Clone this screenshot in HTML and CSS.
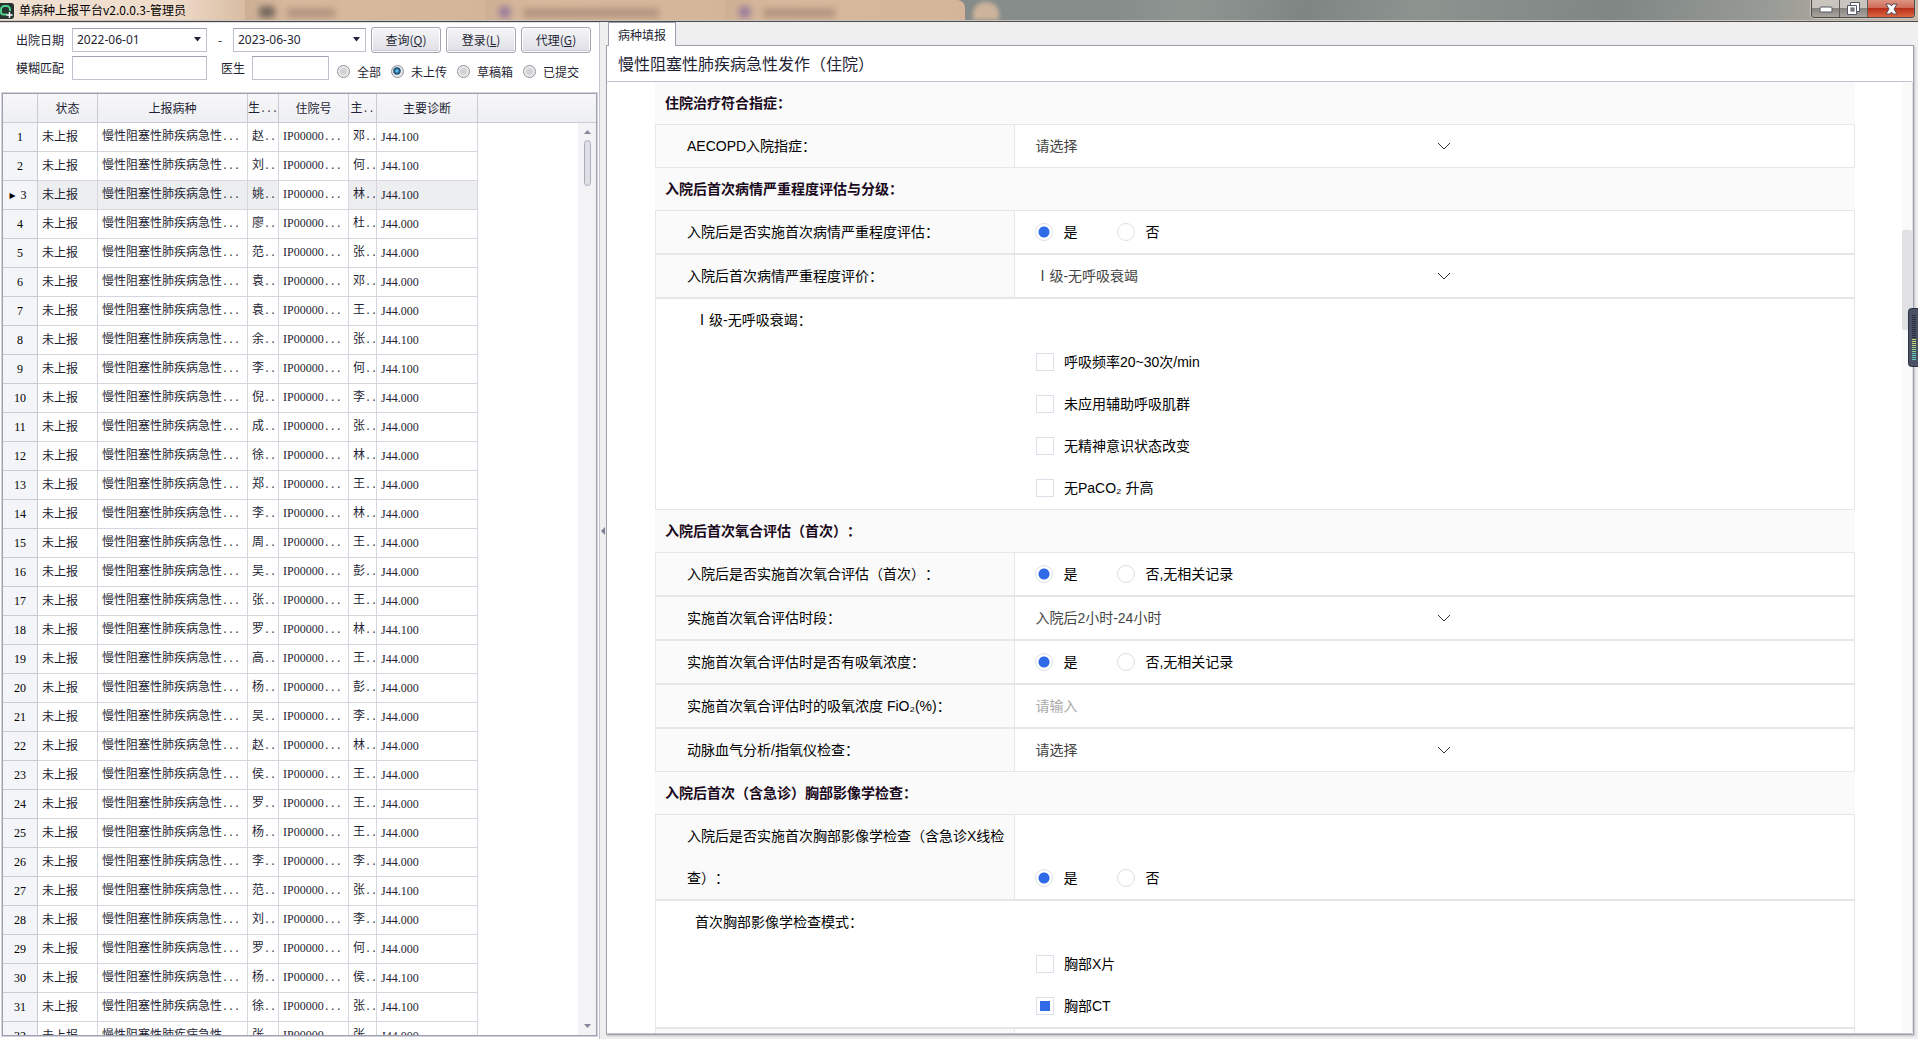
FILE: index.html
```html
<!DOCTYPE html>
<html lang="zh-CN">
<head>
<meta charset="utf-8">
<title>单病种上报平台v2.0.0.3-管理员</title>
<link rel="stylesheet" href="styles.css">
</head>
<body>
<header class="titlebar">
  <div class="glass" aria-hidden="true">
    <div class="glass-tab first"></div>
    <div class="glass-tab"><i class="blob dark"></i><i class="smear short"></i></div>
    <div class="glass-tab"><i class="blob"></i><i class="smear long"></i></div>
    <div class="glass-tab"><i class="blob"></i><i class="smear"></i></div>
    <i class="glass-plus"></i>
  </div>
  <svg class="app-icon" width="14" height="16" viewBox="0 0 14 16"><rect x="-3" width="17" height="16" rx="3" fill="#26332e"/><path d="M7 11.5H3.500A2.500 2.500 0 0 1 1 9V6.500A3.500 3.500 0 0 1 4.500 3h2A3.500 3.500 0 0 1 10 6.500V8" fill="none" stroke="#4fd08c" stroke-width="2"/><path d="M9.500 9v6M6.500 12h6" stroke="#fff" stroke-width="1.500"/></svg>
  <h1 class="app-title">单病种上报平台v2.0.0.3-管理员</h1>
  <div class="window-buttons">
    <button class="win-btn min" aria-label="最小化"><svg width="14" height="8" viewBox="0 0 14 8"><rect x="1" y="2" width="12" height="5" rx="1" fill="#fff" stroke="#535666"/></svg></button>
    <button class="win-btn restore" aria-label="还原"><svg width="13" height="13" viewBox="0 0 13 13"><path d="M3.500.5h9v9h-3v3h-9v-9h3z" fill="#fff" stroke="#535666"/><path d="M3.500 3.500h6v6" fill="none" stroke="#535666"/><rect x="4" y="6" width="3" height="3" fill="#999" stroke="#535666"/></svg></button>
    <button class="win-btn close" aria-label="关闭"><svg width="13" height="12" viewBox="0 0 13 12"><path d="M1 1h4l1.500 2L8 1h4L9 6l3 5H8L6.500 9 5 11H1l3-5z" fill="#fff" stroke="#5b4a55"/></svg></button>
  </div>
</header>
<main class="workspace">
  <section class="left-pane">
    <form class="filters">
      <div class="filter-row">
        <label class="flabel" for="from">出院日期</label>
        <div class="combo from"><select id="from"><option>2022-06-01</option></select><svg width="8" height="5" viewBox="0 0 8 5"><path d="M0 0h7L3.500 4.500z" fill="#222238"/></svg></div>
        <span class="dash">-</span>
        <div class="combo to"><select id="to" aria-label="出院日期止"><option>2023-06-30</option></select><svg width="8" height="5" viewBox="0 0 8 5"><path d="M0 0h7L3.500 4.500z" fill="#222238"/></svg></div>
        <div class="actions">
          <button type="button" class="btn">查询(<u>Q</u>)</button>
          <button type="button" class="btn">登录(<u>L</u>)</button>
          <button type="button" class="btn">代理(<u>G</u>)</button>
        </div>
      </div>
      <div class="filter-row">
        <label class="flabel" for="fuzzy">模糊匹配</label>
        <input class="field fuzzy" id="fuzzy" type="text">
        <label class="doctor-label" for="doctor">医生</label>
        <input class="field doctor" id="doctor" type="text">
        <div class="states">
          <label><input type="radio" name="state">全部</label>
          <label><input type="radio" name="state" checked>未上传</label>
          <label><input type="radio" name="state">草稿箱</label>
          <label><input type="radio" name="state">已提交</label>
        </div>
      </div>
    </form>
    <div class="grid-frame">
      <table class="grid">
        <colgroup><col class="c-no"><col class="c-state"><col class="c-kind"><col class="c-name"><col class="c-ip"><col class="c-doc"><col class="c-diag"><col></colgroup>
        <thead>
          <tr><th></th><th>状态</th><th>上报病种</th><th>生<span class="dots">...</span></th><th>住院号</th><th>主<span class="dots">..</span></th><th>主要诊断</th><th class="rest"></th></tr>
        </thead>
        <tbody id="rows"></tbody>
      </table>
      <div class="grid-scroll">
        <svg width="7" height="4" viewBox="0 0 7 4"><path d="M0 4h7L3.500 0z" fill="#85879a"/></svg>
        <div class="grid-thumb"></div>
        <svg class="down" width="7" height="4" viewBox="0 0 7 4"><path d="M0 0h7L3.500 4z" fill="#85879a"/></svg>
      </div>
    </div>
  </section>
  <div class="splitter"><svg width="4" height="8" viewBox="0 0 4 8"><path d="M4 0v8L0 4z" fill="#7d8093"/></svg></div>
  <section class="right-pane">
    <nav class="tabs"><button class="tab">病种填报</button></nav>
    <div class="sheet">
      <h2 class="sheet-title">慢性阻塞性肺疾病急性发作（住院）</h2>
      <div class="viewport">
        <form class="report">
          <h3>住院治疗符合指症：</h3>
          <div class="row"><label class="name" for="s1">AECOPD入院指症：</label><div class="value"><div class="pick"><select id="s1"><option>请选择</option></select><svg width="14" height="8" viewBox="0 0 14 8"><path d="M1 1l6 6 6-6" fill="none" stroke="#333"/></svg></div></div></div>
          <h3>入院后首次病情严重程度评估与分级：</h3>
          <div class="row"><span class="name" id="n2">入院后是否实施首次病情严重程度评估：</span><div class="value" role="radiogroup" aria-labelledby="n2"><label class="opt"><input type="radio" name="r2" checked>是</label><label class="opt"><input type="radio" name="r2">否</label></div></div>
          <div class="row"><label class="name" for="s3">入院后首次病情严重程度评价：</label><div class="value"><div class="pick"><select id="s3"><option>Ⅰ级-无呼吸衰竭</option></select><svg width="14" height="8" viewBox="0 0 14 8"><path d="M1 1l6 6 6-6" fill="none" stroke="#333"/></svg></div></div></div>
          <fieldset class="block">
            <legend>Ⅰ级-无呼吸衰竭：</legend>
            <label class="opt"><input type="checkbox">呼吸频率20~30次/min</label>
            <label class="opt"><input type="checkbox">未应用辅助呼吸肌群</label>
            <label class="opt"><input type="checkbox">无精神意识状态改变</label>
            <label class="opt"><input type="checkbox">无PaCO₂ 升高</label>
          </fieldset>
          <h3>入院后首次氧合评估（首次）：</h3>
          <div class="row"><span class="name" id="n4">入院后是否实施首次氧合评估（首次）：</span><div class="value" role="radiogroup" aria-labelledby="n4"><label class="opt"><input type="radio" name="r4" checked>是</label><label class="opt"><input type="radio" name="r4">否,无相关记录</label></div></div>
          <div class="row"><label class="name" for="s5">实施首次氧合评估时段：</label><div class="value"><div class="pick"><select id="s5"><option>入院后2小时-24小时</option></select><svg width="14" height="8" viewBox="0 0 14 8"><path d="M1 1l6 6 6-6" fill="none" stroke="#333"/></svg></div></div></div>
          <div class="row"><span class="name" id="n6">实施首次氧合评估时是否有吸氧浓度：</span><div class="value" role="radiogroup" aria-labelledby="n6"><label class="opt"><input type="radio" name="r6" checked>是</label><label class="opt"><input type="radio" name="r6">否,无相关记录</label></div></div>
          <div class="row"><label class="name" for="t7">实施首次氧合评估时的吸氧浓度 FiO₂(%)：</label><div class="value"><input class="entry" id="t7" type="text" placeholder="请输入"></div></div>
          <div class="row"><label class="name" for="s8">动脉血气分析/指氧仪检查：</label><div class="value"><div class="pick"><select id="s8"><option>请选择</option></select><svg width="14" height="8" viewBox="0 0 14 8"><path d="M1 1l6 6 6-6" fill="none" stroke="#333"/></svg></div></div></div>
          <h3>入院后首次（含急诊）胸部影像学检查：</h3>
          <div class="row"><span class="name" id="n9">入院后是否实施首次胸部影像学检查（含急诊X线检查）：</span><div class="value" role="radiogroup" aria-labelledby="n9"><label class="opt"><input type="radio" name="r9" checked>是</label><label class="opt"><input type="radio" name="r9">否</label></div></div>
          <fieldset class="block">
            <legend>首次胸部影像学检查模式：</legend>
            <label class="opt"><input type="checkbox">胸部X片</label>
            <label class="opt"><input type="checkbox" checked>胸部CT</label>
          </fieldset>
          <div class="row"><span class="name"></span><div class="value"></div></div>
        </form>
        <div class="view-scroll"><div class="view-thumb"></div></div>
      </div>
    </div>
  </section>
</main>
<svg class="meter" width="10" height="59" viewBox="0 0 10 59" aria-hidden="true">
  <rect x=".5" y=".5" width="14" height="58" rx="3" fill="#4b5265" stroke="#2e3240"/>
  <path d="M6 7v24" stroke="#2a2e3c" stroke-width="4" stroke-dasharray="1 1"/>
  <path d="M6 31v8" stroke="#c3d873" stroke-width="4" stroke-dasharray="1 1"/>
  <path d="M6 39v6" stroke="#8fd08f" stroke-width="4" stroke-dasharray="1 1"/>
  <path d="M6 45v8" stroke="#62cdb8" stroke-width="4" stroke-dasharray="1 1"/>
</svg>
<script src="rows.js"></script>
</body>
</html>
```
FILE: styles.css
```css
* { box-sizing: border-box; }
body {
  margin: 0;
  height: 100vh;
  display: flex;
  flex-direction: column;
  overflow: hidden;
  background: #efefef;
  color: #1f1f35;
  font: 12px/16px "Noto Sans CJK SC", sans-serif;
  text-spacing-trim: space-all;
}
button, input, select { font: inherit; color: inherit; margin: 0; }
h1, h2, h3 { margin: 0; font-weight: normal; }
select { appearance: none; border: 0; background: none; padding: 0; outline: 0; }

/* title bar */
.titlebar {
  position: relative;
  flex: none;
  height: 22px;
  display: flex;
  align-items: flex-start;
  background: linear-gradient(100deg, #858c8a 0 58%, #8f9692 62%, #7e8583 68%, #8d938f 74%, #7f8684 84%, #979b96 92%, #c9b7a5 100%);
  border-bottom: 1px solid #4e4a48;
  box-shadow: inset 0 -1px #c9c4c0;
}
.glass {
  position: absolute;
  inset: 0 auto 1px 0;
  width: 1003px;
  display: flex;
  overflow: hidden;
}
.glass-tab {
  flex: 0 0 240px;
  display: flex;
  align-items: flex-end;
  padding: 0 0 2px 14px;
  gap: 12px;
  background: linear-gradient(90deg, #cdb094, #d8b99d 20%, #d5b599);
}
.glass-tab.first { flex-basis: 245px; background: linear-gradient(90deg, #f0e0d2, #efdccb 70%, #d8bca2); }
.glass-tab:nth-of-type(4) { border-radius: 0 8px 0 0; }
.blob { width: 12px; height: 12px; border-radius: 4px; background: #9c7f9c; filter: blur(3px); }
.blob.dark { width: 16px; background: #77695f; }
.smear { width: 72px; height: 10px; background: #b39780; filter: blur(3px); }
.smear.short { width: 48px; }
.smear.long { width: 136px; }
.glass-plus { align-self: flex-end; width: 26px; height: 18px; margin-left: 8px; border-radius: 12px 12px 0 0; background: #cdb39b; filter: blur(2px); }
.app-icon { position: relative; margin-top: 3px; }
.app-title { position: relative; margin: 2px 0 0 5px; font-size: 12px; line-height: 16px; color: #000; }
.window-buttons {
  position: relative;
  display: flex;
  margin: 0 3px 0 auto;
  height: 18px;
  border: 1px solid #4b4846;
  border-top: 0;
  border-radius: 0 0 4px 4px;
  overflow: hidden;
  box-shadow: 0 0 0 1px #c9c6c2;
}
.win-btn {
  width: 28px;
  padding: 0;
  border: 0;
  border-right: 1px solid #5f5c5a;
  display: grid;
  place-items: center;
  background: linear-gradient(#c9c4be 0 45%, #88847f 50%, #aaa59f);
}
.win-btn.close { width: 46px; border: 0; background: linear-gradient(#dd9484, #cf6b58 45%, #b9301a 50%, #dd6543); }

/* layout */
.workspace { flex: 1; min-height: 0; display: flex; }
.left-pane { flex: none; width: 599px; display: flex; flex-direction: column; background: #fff; border-top: 1px solid #dcdce2; }
.splitter { flex: none; width: 7px; display: flex; align-items: center; justify-content: center; border-left: 1px solid #c3c4d0; }
.right-pane { flex: 1; min-width: 0; display: flex; flex-direction: column; padding: 0 4px 4px 0; }

/* filters */
.filters { flex: none; height: 70px; padding: 4px 0 0 16px; display: flex; flex-direction: column; gap: 3px; }
.filter-row { display: flex; align-items: center; height: 25px; }
.flabel { flex: none; width: 56px; }
.combo, .field { border: 1px solid #c0c1cc; border-top-color: #9fa0ae; background: #fff; height: 24px; }
.combo { display: grid; align-items: center; }
.combo > * { grid-area: 1 / 1; }
.combo select { font-family: "Noto Sans", sans-serif; padding-left: 4px; height: 22px; }
.combo svg { justify-self: end; margin-right: 4px; pointer-events: none; }
.from, .fuzzy { width: 135px; }
.to { width: 133px; }
.doctor { width: 77px; }
.dash { width: 26px; text-align: center; }
.doctor-label { padding: 0 7px 0 14px; }
.actions { display: flex; gap: 5px; margin-left: 5px; }
.btn {
  width: 70px;
  height: 26px;
  padding: 0;
  border: 1px solid #a3a4b2;
  border-radius: 3px;
  background: linear-gradient(#f6f6f8, #dedfe5);
  box-shadow: inset 0 0 0 1px #fff, inset 0 -2px #c9cad3;
}
.states { display: flex; align-items: center; gap: 10px; margin-left: 8px; }
.states label { display: flex; align-items: center; gap: 7px; height: 24px; padding-top: 8px; }
.states input {
  appearance: none;
  width: 13px;
  height: 13px;
  border: 1px solid #8f9096;
  border-radius: 50%;
  background: radial-gradient(circle, #d0d2d5 30%, #f2f2f2 70%);
}
.states input:checked { background: radial-gradient(circle at 45% 45%, #5fc4ee 8%, #123f66 36%, #e6eaee 52%); }

/* patient grid */
.grid-frame {
  flex: 1;
  min-height: 0;
  display: flex;
  position: relative;
  margin: 0 2px 3px;
  border: 1px solid #9fa1b0;
  outline: 1px solid #d0d1da;
  overflow: hidden;
}
.grid { width: 100%; height: max-content; table-layout: fixed; border-collapse: separate; border-spacing: 0; }
.c-no { width: 35px; }
.c-state { width: 60px; }
.c-kind { width: 150px; }
.c-name { width: 31px; }
.c-ip { width: 70px; }
.c-doc { width: 28px; }
.c-diag { width: 101px; }
.grid th {
  height: 29px;
  padding: 0;
  font-weight: normal;
  white-space: nowrap;
  border-right: 1px solid #c9cad4;
  border-bottom: 1px solid #c9cad4;
  background: linear-gradient(#f7f7f9, #eeeff2);
}
.grid th.rest { border-right: 0; }
.grid td {
  height: 29px;
  padding: 0 0 0 4px;
  overflow: hidden;
  white-space: nowrap;
  border-right: 1px solid #d6d7de;
  border-bottom: 1px solid #d6d7de;
  font-family: "Liberation Serif", "Noto Sans CJK SC", serif;
}
.grid td.no { padding: 0; text-align: center; color: #000; background: #f4f5f8; border-color: #c9cad4; }
.grid td.rest { border: 0; }
.grid tr.current td { background: #edeef0; }
.grid tr.current td.focus, .grid tr.current td.rest { background: #fff; }
.grid tr.current td.no { background: #f4f5f8; }
.current .no::before { content: "▸"; font-family: "DejaVu Sans", sans-serif; font-size: 12px; line-height: 12px; margin: 0 5px 0 -4px; }
.dots { font-family: "Liberation Mono", monospace; font-size: 10px; }
.grid-scroll {
  position: absolute;
  inset: 29px 0 0 auto;
  width: 18px;
  padding: 7px 0;
  display: flex;
  flex-direction: column;
  align-items: center;
  gap: 6px;
  background: #f3f3f6;
}
.grid-thumb { width: 7px; height: 46px; border: 1px solid #a9abb8; border-radius: 4px; background: #dfe0e6; }
.grid-scroll .down { margin-top: auto; }

/* report sheet */
.tabs { flex: none; height: 23px; padding-left: 2px; display: flex; }
.tab { position: relative; z-index: 1; height: 24px; width: 68px; padding: 0; border: 1px solid #9fa0af; border-bottom: 0; background: #fff; }
.sheet { flex: 1; min-height: 0; display: flex; flex-direction: column; background: #fff; border: 1px solid #9fa0af; box-shadow: 1px 1px 2px #c0c0c6; }
.sheet-title { flex: none; padding-left: 11px; font-size: 16px; line-height: 35px; }
.viewport { flex: 1; min-height: 0; display: flex; overflow: hidden; border: 1px solid #c2c3cf; border-right-color: #e0e0e8; border-left: 0; border-radius: 2px; }
.report { flex: 1; min-width: 0; padding: 0 47px 0 48px; font-family: "Liberation Sans", "Noto Sans CJK SC", sans-serif; font-size: 14px; line-height: 42px; color: #000; }
.report h3 { padding-left: 10px; font-size: 14px; font-weight: bold; height: 42px; background: #fafafa; color: #1a0a20; }
.row { display: flex; min-height: 44px; border: 1px solid #e6e6e6; }
.name { flex: none; width: 30%; padding: 0 10px 0 31px; background: #fafafa; border-right: 1px solid #e6e6e6; }
.value { flex: 1; min-width: 0; display: flex; align-items: flex-end; padding-left: 20px; }
.pick { width: 52%; display: grid; align-items: center; color: #444; }
.pick > * { grid-area: 1 / 1; }
.pick select { width: 100%; height: 42px; }
.pick svg { justify-self: end; margin-right: 10px; pointer-events: none; }
.entry { width: 52%; height: 42px; padding: 0; border: 0; background: none; }
.entry::placeholder { color: #aaa; opacity: 1; }
.opt { display: flex; align-items: center; gap: 10px; }
.value .opt { min-width: 82px; }
.opt input { appearance: none; width: 18px; height: 18px; border: 1px solid #dcdfe8; background: #fff content-box; padding: 3px; }
.opt input[type="radio"] { border-radius: 50%; }
.opt input:checked { background: radial-gradient(circle, #2f6be6 5px, #fff 6px); }
.opt input[type="checkbox"]:checked { background: #2f6be6 content-box; }
.block { margin: 0; padding: 0; min-width: 0; border: 1px solid #e6e6e6; display: flex; flex-direction: column; }
.block legend { float: left; padding: 0 0 0 39px; }
.block .opt { padding-left: 380px; }
.view-scroll { flex: none; width: 10px; background: #fafafa; padding-top: 148px; }
.view-thumb { height: 100px; border-radius: 2px; background: #e1e1e3; }
.meter { position: absolute; right: 0; top: 308px; }
```
FILE: rows.js
```js
const records = [
  ["赵", "邓", "J44.100"], ["刘", "何", "J44.100"], ["姚", "林", "J44.100"], ["廖", "杜", "J44.000"],
  ["范", "张", "J44.000"], ["袁", "邓", "J44.000"], ["袁", "王", "J44.000"], ["余", "张", "J44.100"],
  ["李", "何", "J44.100"], ["倪", "李", "J44.000"], ["成", "张", "J44.000"], ["徐", "林", "J44.000"],
  ["郑", "王", "J44.000"], ["李", "林", "J44.000"], ["周", "王", "J44.000"], ["吴", "彭", "J44.000"],
  ["张", "王", "J44.000"], ["罗", "林", "J44.100"], ["高", "王", "J44.000"], ["杨", "彭", "J44.000"],
  ["吴", "李", "J44.000"], ["赵", "林", "J44.000"], ["侯", "王", "J44.000"], ["罗", "王", "J44.000"],
  ["杨", "王", "J44.000"], ["李", "李", "J44.000"], ["范", "张", "J44.100"], ["刘", "李", "J44.000"],
  ["罗", "何", "J44.000"], ["杨", "侯", "J44.100"], ["徐", "张", "J44.100"], ["张", "张", "J44.000"]
];
const currentRow = 3;
const dots = n => `<span class="dots">${".".repeat(n)}</span>`;

document.getElementById("rows").innerHTML = records.map(([name, doctor, code], i) => `
  <tr${i + 1 === currentRow ? ' class="current"' : ""}>
    <td class="no">${i + 1}</td>
    <td>未上报</td>
    <td>慢性阻塞性肺疾病急性${dots(3)}</td>
    <td>${name}${dots(2)}</td>
    <td class="focus">IP00000${dots(3)}</td>
    <td>${doctor}${dots(2)}</td>
    <td>${code}</td>
    <td class="rest"></td>
  </tr>`).join("");
```
